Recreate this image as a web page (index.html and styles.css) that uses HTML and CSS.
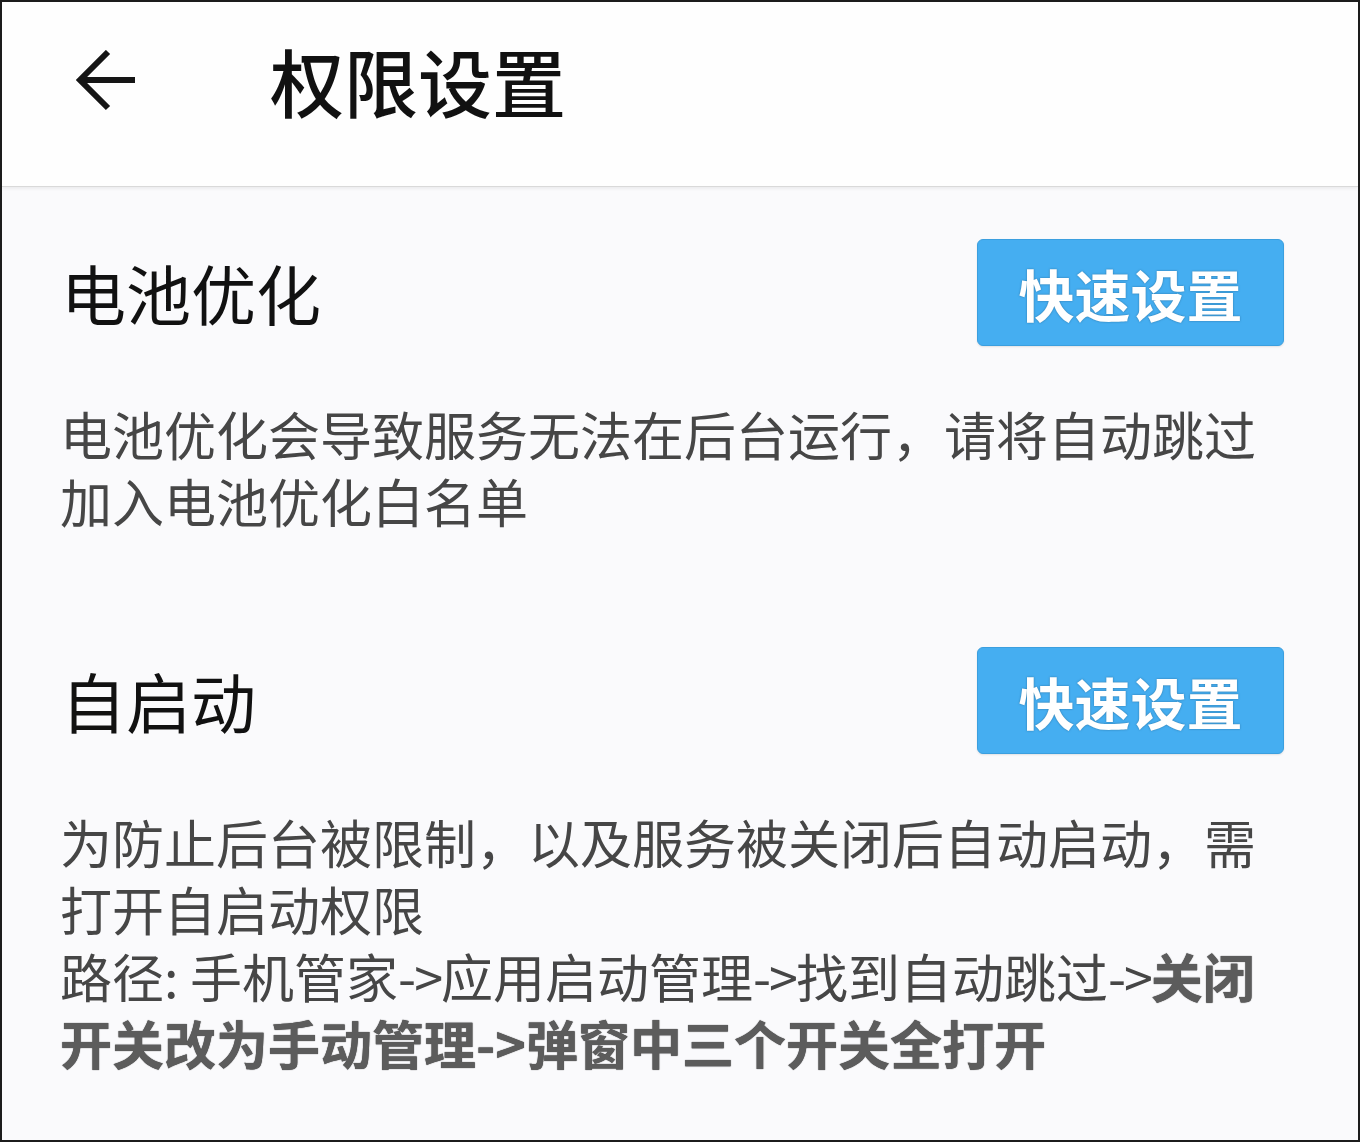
FILE: index.html
```html
<!DOCTYPE html>
<html lang="zh-CN">
<head>
    <meta charset="UTF-8">
    <title>权限设置</title>
    <link rel="stylesheet" href="styles.css">
</head>
<body>
    <header class="topbar">
        <!-- back arrow -->
        <svg class="back-icon" width="62" height="62" viewBox="0 0 62 62">
            <path d="M60 30 H6 M33 2 L5 30 L33 58" fill="none" stroke="#151515" stroke-width="6" stroke-linejoin="miter"/>
        </svg>
        <h1 class="title">权限设置</h1>
    </header>

    <main class="content">
        <!-- battery optimization -->
        <section class="block">
            <div class="block-head">
                <h2>电池优化</h2>
                <button class="quick-btn">快速设置</button>
            </div>
            <p class="desc">电池优化会导致服务无法在后台运行，请将自动跳过加入电池优化白名单</p>
        </section>

        <!-- auto start -->
        <section class="block block-second">
            <div class="block-head">
                <h2>自启动</h2>
                <button class="quick-btn">快速设置</button>
            </div>
            <p class="desc">为防止后台被限制，以及服务被关闭后自动启动，需打开自启动权限<br>路径: 手机管家<span class="arrow">-&gt;</span>应用启动管理<span class="arrow">-&gt;</span>找到自动跳过<span class="arrow">-&gt;</span><strong>关闭开关改为手动管理-&gt;弹窗中三个开关全打开</strong></p>
        </section>
    </main>
</body>
</html>
```

FILE: styles.css
```css
* {
    box-sizing: border-box;
}

body {
    margin: 0;
    width: 1360px;
    height: 1142px;
    border: 2px solid #1c1c1c;
    background-color: #fafafc;
    font-family: "Noto Sans CJK SC", "Noto Sans", sans-serif;
    color: #111;
    overflow: hidden;
}

.topbar {
    height: 185px;
    display: flex;
    align-items: center;
    padding: 0 0 28px 73px;
    background-color: #fefefe;
    border-bottom: 1px solid #d9d9d9;
    box-shadow: 0 2px 3px rgba(0, 0, 0, 0.06);
}

.back-icon {
    display: block;
    margin-top: 2px;
}

.title {
    margin: 0 0 0 133px;
    font-size: 74px;
    font-weight: 500;
    line-height: 1;
    color: #111;
}

.content {
    padding: 52px 74px 0 58px;
}

.block-second {
    margin-top: 113px;
}

.block-head {
    display: flex;
    align-items: center;
    justify-content: space-between;
    height: 107px;
}

.block-head h2 {
    margin: 0 0 0 1px;
    font-size: 65px;
    font-weight: 400;
    line-height: 1;
    color: #111;
}

.quick-btn {
    width: 307px;
    height: 107px;
    border: 1px solid #3b9fdf;
    border-radius: 6px;
    background-color: #45aef1;
    color: #fff;
    font-family: inherit;
    font-size: 56px;
    font-weight: 700;
    text-shadow: 0 0 2px rgba(20, 60, 90, 0.55);
    box-shadow: 0 1px 2px rgba(0, 0, 0, 0.1);
    cursor: pointer;
}

.desc {
    margin: 54px 0 0;
    font-size: 52px;
    line-height: 67px;
    color: #464646;
}

/* the "->" separators sit a little tighter than the default glyphs */
.desc .arrow {
    display: inline-block;
    letter-spacing: -2px;
}

.desc strong {
    font-weight: 700;
    color: #5c5c5c;
    text-shadow: 0 0 1px #222;
}
```
